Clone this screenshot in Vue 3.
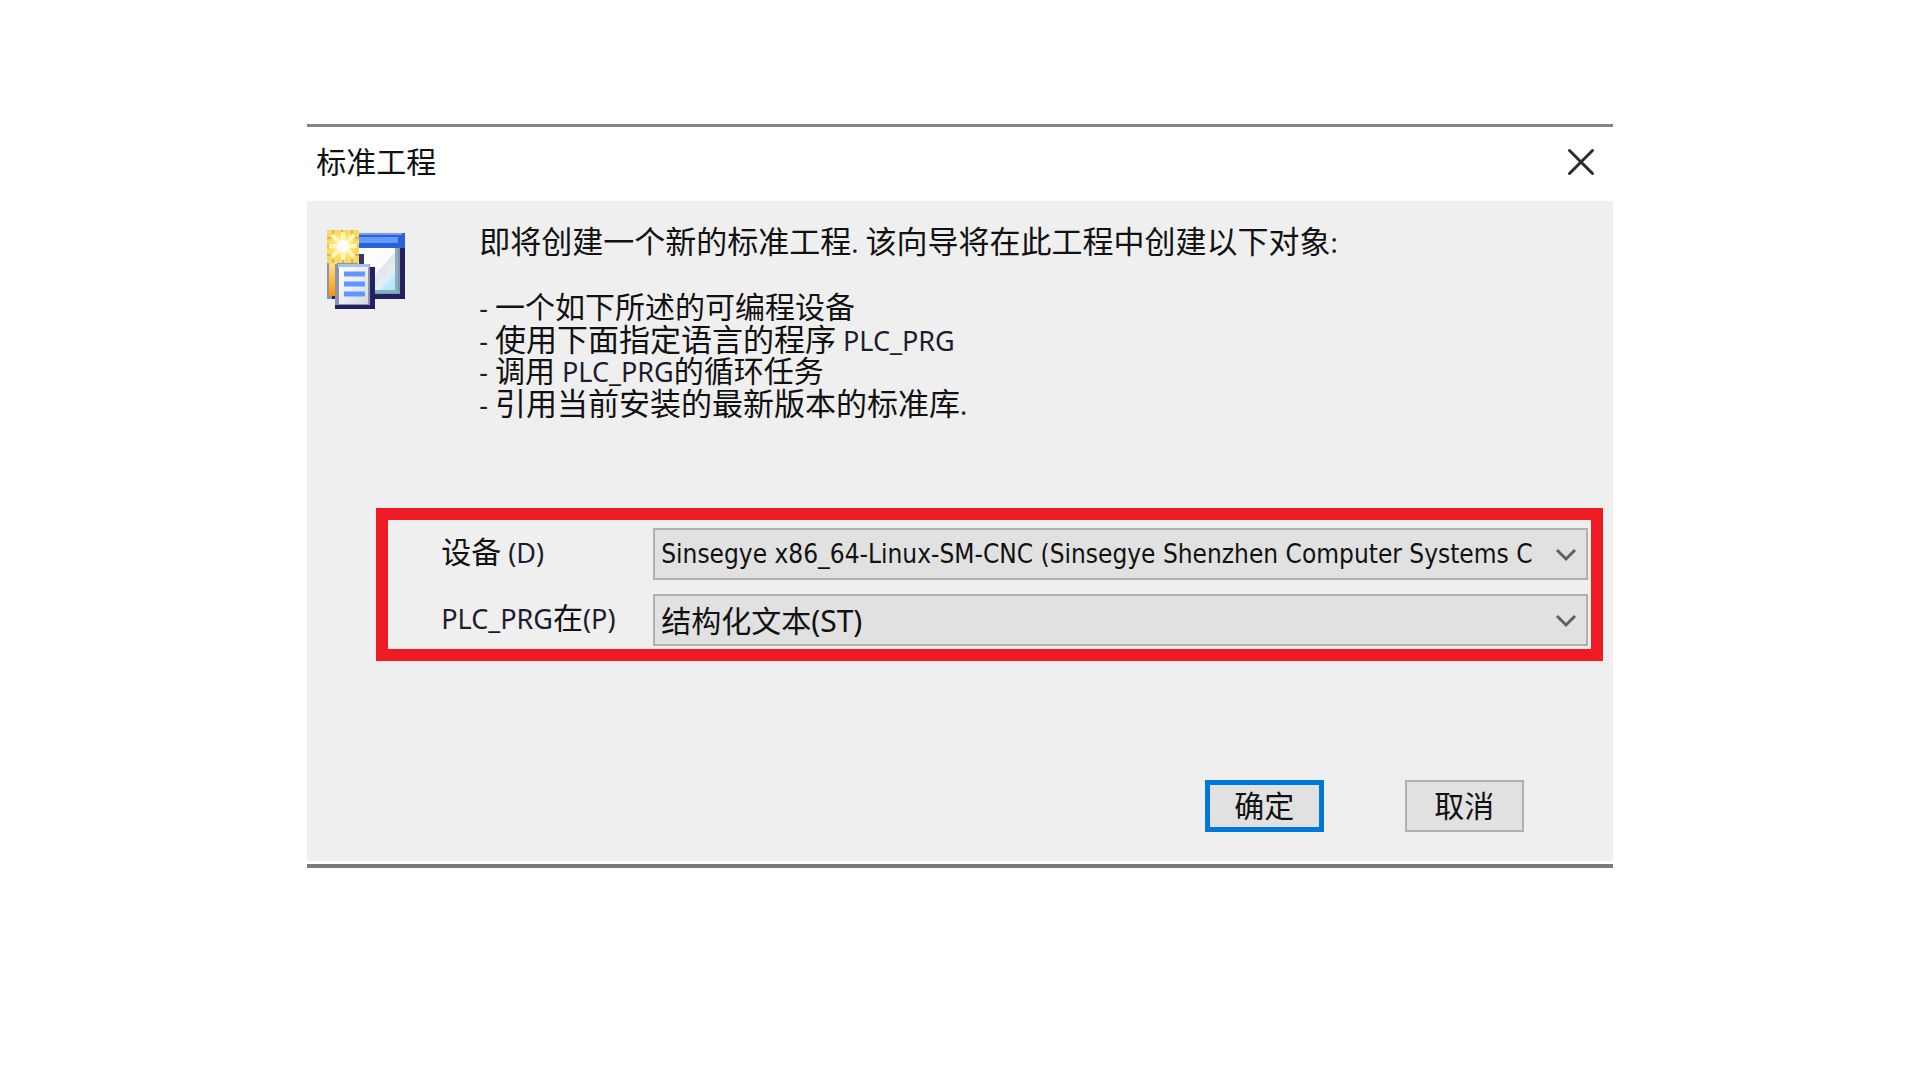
<script setup>
import { ref } from 'vue'

const device = ref('Sinsegye x86_64-Linux-SM-CNC (Sinsegye Shenzhen Computer Systems C')
const language = ref('结构化文本(ST)')
</script>

<template>
  <main class="page">
    <section class="dialog" role="dialog" aria-labelledby="dialog-title">
      <header class="titlebar">
        <h1 id="dialog-title">标准工程</h1>
        <button class="close" type="button" aria-label="关闭">
          <svg viewBox="0 0 28 28" width="28" height="28" fill="none" stroke="#2b2b2b" stroke-width="3" stroke-linecap="round">
            <path d="M2.500 2.500L25.500 25.500M25.500 2.500L2.500 25.500" />
          </svg>
        </button>
      </header>

      <div class="body">
        <div class="intro">
          <svg class="app-icon" viewBox="0 0 80 80" width="80" height="80" aria-hidden="true">
            <defs>
              <linearGradient id="pane" x1="0" y1="0" x2="1" y2="1">
                <stop offset="0" stop-color="#ffffff" />
                <stop offset="0.5" stop-color="#fbfbfb" />
                <stop offset="0.52" stop-color="#e2e4e8" />
                <stop offset="0.72" stop-color="#e6eef4" />
                <stop offset="0.74" stop-color="#c4ecff" />
                <stop offset="1" stop-color="#a4e2ff" />
              </linearGradient>
              <linearGradient id="bar" x1="0" y1="0" x2="0" y2="1">
                <stop offset="0" stop-color="#ffe37a" />
                <stop offset="1" stop-color="#ff9400" />
              </linearGradient>
              <linearGradient id="sheet" x1="0" y1="0" x2="1" y2="1">
                <stop offset="0" stop-color="#ffffff" />
                <stop offset="1" stop-color="#d4dae2" />
              </linearGradient>
              <radialGradient id="glow">
                <stop offset="0" stop-color="#ffffff" />
                <stop offset="0.4" stop-color="#fff6a8" />
                <stop offset="1" stop-color="#fbdc5c" />
              </radialGradient>
            </defs>
            <rect x="1" y="4" width="78" height="66" fill="#8c92b4" />
            <path d="M74 16H79V70H6V65H74Z" fill="#25205f" />
            <rect x="30" y="4" width="49" height="15" fill="#2a62d8" />
            <rect x="30" y="8" width="42" height="6" fill="#6699ff" />
            <rect x="30" y="4" width="46" height="2" fill="#7d9de0" />
            <rect x="32" y="19" width="40" height="45" fill="url(#pane)" />
            <path d="M69 19H72V64H48V61H69Z" fill="#7fb4b8" />
            <rect x="3" y="34" width="8" height="33" fill="url(#bar)" />
            <rect x="33" y="25" width="5" height="12" fill="#353766" />
            <rect x="1" y="1" width="32" height="33" fill="#f8da60" />
            <path d="M7 1V6M16 1V5M26 1V6M1 9H5M1 17H5M1 26H5M33 9H29M33 17H29M33 26H29M7 34V30M17 34V30M26 34V30" stroke="#d8b458" stroke-width="2" />
            <circle cx="17" cy="17" r="13" fill="url(#glow)" />
            <path d="M17 3V31M3 17H31M6 6L28 28M28 6L6 28" stroke="#fff7ba" stroke-width="4" />
            <circle cx="17" cy="17" r="6" fill="#ffffff" />
            <path d="M13 38H49V80H9V73H13Z" fill="#25205f" />
            <rect x="9" y="35" width="35" height="41" fill="#8a94ac" />
            <rect x="12" y="35" width="31" height="4" fill="#a8c4ee" />
            <rect x="13" y="38" width="29" height="37" fill="url(#sheet)" />
            <path d="M18 45H39M18 55H39M18 65H39" stroke="#5f97ff" stroke-width="5" />
          </svg>

          <div class="description">
            <p class="lead">即将创建一个新的标准工程<span class="latin">. </span>该向导将在此工程中创建以下对象<span class="latin">:</span></p>
            <ul>
              <li class="narrow"><span class="latin">- </span>一个如下所述的可编程设备</li>
              <li><span class="latin">- </span>使用下面指定语言的程序<span class="latin"> PLC_PRG</span></li>
              <li class="narrow"><span class="latin">- </span>调用<span class="latin"> PLC_PRG</span>的循环任务</li>
              <li><span class="latin">- </span>引用当前安装的最新版本的标准库<span class="latin">.</span></li>
            </ul>
          </div>
        </div>

        <form class="fields" @submit.prevent>
          <div class="field">
            <label for="device">设备<span class="latin"> (D)</span></label>
            <div class="combo">
              <select id="device" v-model="device" class="device">
                <option>Sinsegye x86_64-Linux-SM-CNC (Sinsegye Shenzhen Computer Systems C</option>
              </select>
              <svg class="chevron" viewBox="0 0 22 14" width="22" height="14" aria-hidden="true">
                <path d="M2 2L11 11L20 2" fill="none" stroke="#606060" stroke-width="3" />
              </svg>
            </div>
          </div>
          <div class="field">
            <label for="language"><span class="latin">PLC_PRG</span>在<span class="latin">(P)</span></label>
            <div class="combo">
              <select id="language" v-model="language">
                <option>结构化文本(ST)</option>
              </select>
              <svg class="chevron" viewBox="0 0 22 14" width="22" height="14" aria-hidden="true">
                <path d="M2 2L11 11L20 2" fill="none" stroke="#606060" stroke-width="3" />
              </svg>
            </div>
          </div>
        </form>

        <footer class="actions">
          <button class="btn primary" type="button">确定</button>
          <button class="btn" type="button">取消</button>
        </footer>
      </div>
    </section>
  </main>
</template>

<style>
body {
  margin: 0;
  background: #fff;
}
</style>

<style scoped>
.page {
  padding: 124px 16px;
  font-family: "Noto Sans", "Noto Sans CJK SC", sans-serif;
  font-size: 30px;
  line-height: 32px;
  color: #111;
}

.dialog {
  width: 69.15%;
  margin: 0 auto;
  border-top: 3px solid #858585;
  border-bottom: 4px solid #7a7a7a;
}

.titlebar {
  display: flex;
  align-items: center;
  justify-content: space-between;
  height: 74px;
  padding: 0 18px 4px 9px;
  box-sizing: border-box;
}

h1 {
  margin: 0;
  font-size: 30px;
  font-weight: 400;
}

.close {
  display: flex;
  padding: 0;
  border: 0;
  background: none;
}

.body {
  margin-bottom: 3px;
  padding: 24px 10px 29px 69px;
  background: #efefef;
}

.intro {
  display: flex;
  gap: 73px;
  margin-left: -50px;
}

.app-icon {
  flex: none;
  margin-top: 4px;
}

.description {
  flex: 1;
  font-size: 31px;
}

.lead {
  margin: 0 0 34px;
}

ul {
  margin: 0;
  padding: 0;
  list-style: none;
}

.narrow {
  font-size: 30px;
}

.latin {
  font-size: 27px;
  line-height: 20px;
  color: #1c1c30;
  white-space: pre;
}

.fields {
  display: flex;
  flex-direction: column;
  gap: 14px;
  margin-top: 89px;
  padding: 8px 3px 3px 53px;
  border: 12px solid #ed1c24;
}

.field {
  display: flex;
}

label {
  width: 212px;
  flex: none;
  padding-top: 8px;
  box-sizing: border-box;
}

.combo {
  position: relative;
  flex: 1;
  min-width: 0;
}

select {
  display: block;
  width: 100%;
  height: 52px;
  margin: 0;
  padding: 0 46px 0 6px;
  box-sizing: border-box;
  appearance: none;
  border: 2px solid #b0b0b0;
  border-radius: 0;
  background: #e1e1e1;
  color: #111;
  font-family: inherit;
  font-size: 30px;
  overflow: hidden;
}

select.device {
  font-family: "DejaVu Sans Condensed", "Noto Sans", sans-serif;
  font-size: 26px;
}

.chevron {
  position: absolute;
  top: 20px;
  right: 11px;
  pointer-events: none;
}

.actions {
  display: flex;
  justify-content: flex-end;
  gap: 81px;
  margin-top: 119px;
  padding-right: 79px;
}

.btn {
  width: 119px;
  height: 52px;
  padding: 0;
  border: 2px solid #b0b0b0;
  background: #e1e1e1;
  color: #111;
  font-family: inherit;
  font-size: 30px;
  line-height: 32px;
}

.primary {
  border: 5px solid #0078d7;
}
</style>
